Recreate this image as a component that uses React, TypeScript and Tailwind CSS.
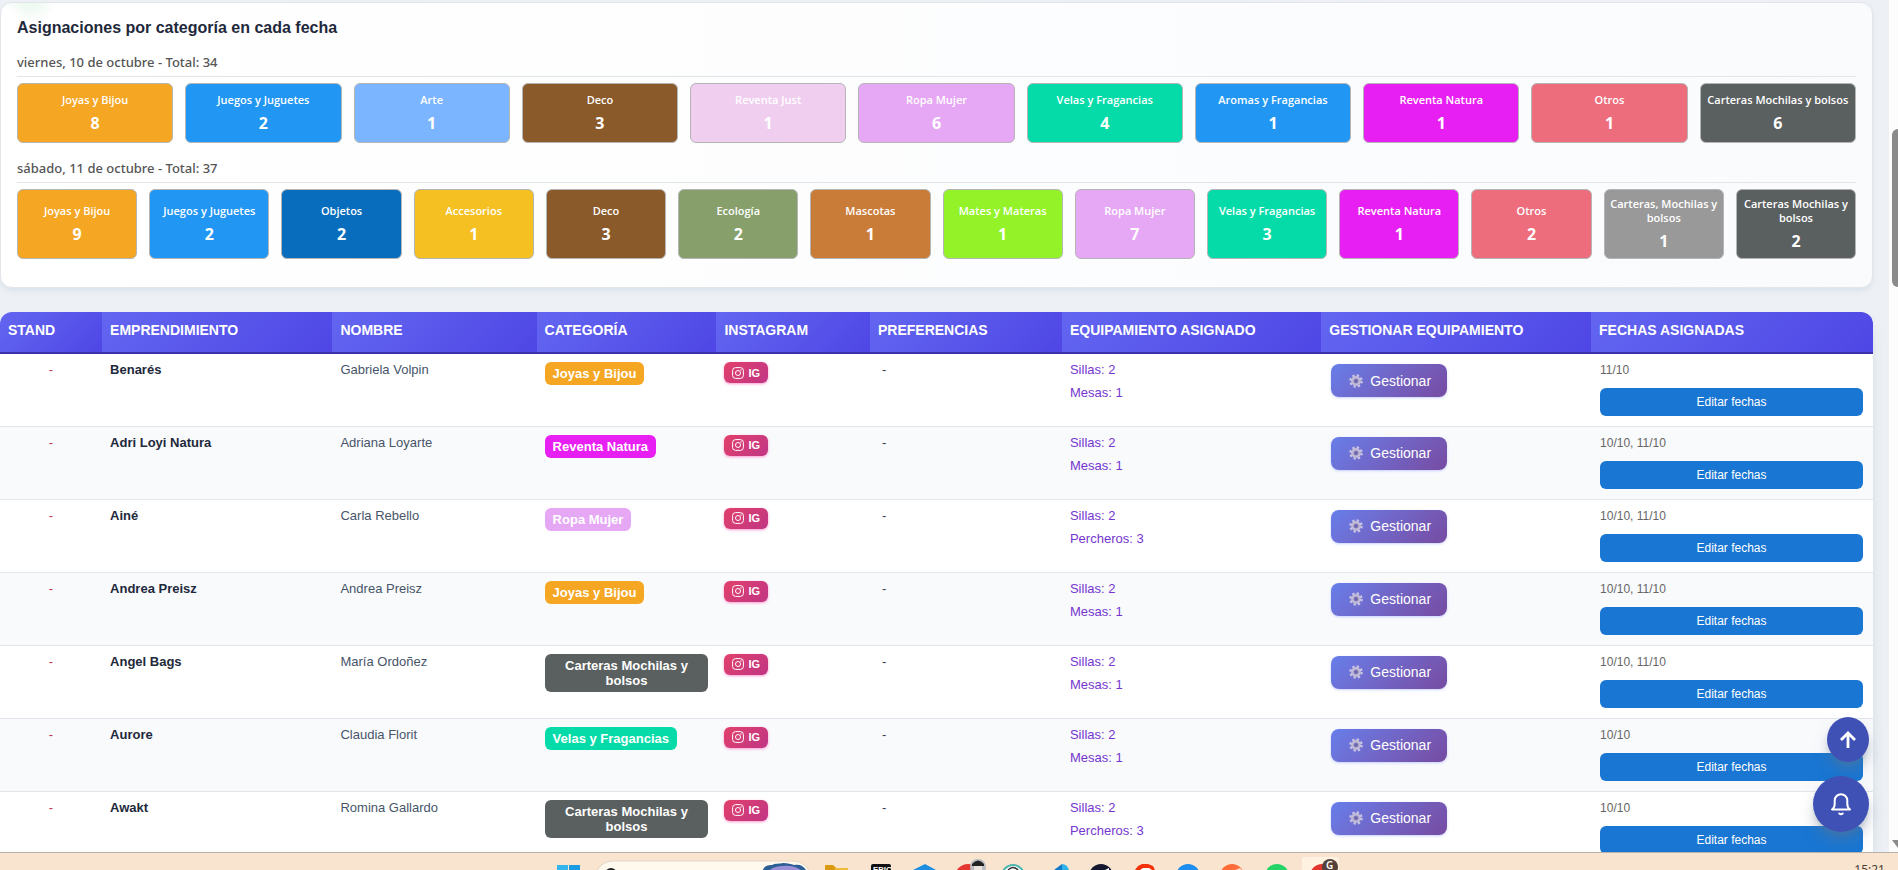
import React from "react";

type Category = { name: string; count: number; color: string };
type Row = { brand: string; owner: string; category: string; second: string; dates: string };

const COLORS: Record<string, string> = {
  "Joyas y Bijou": "bg-[#f5a623]",
  "Juegos y Juguetes": "bg-[#2196f3]",
  Arte: "bg-[#7bb5ff]",
  Deco: "bg-[#8b5a2b]",
  "Reventa Just": "bg-[#efcef0]",
  "Ropa Mujer": "bg-[#e6a8f5]",
  "Velas y Fragancias": "bg-[#04dba9]",
  "Aromas y Fragancias": "bg-[#2196f3]",
  "Reventa Natura": "bg-[#e81ff2]",
  Otros: "bg-[#ed6d7d]",
  "Carteras Mochilas y bolsos": "bg-[#5a5f5f]",
  "Carteras, Mochilas y bolsos": "bg-[#999999]",
  Objetos: "bg-[#086dbd]",
  Accesorios: "bg-[#f4c022]",
  Ecología: "bg-[#869f6b]",
  Mascotas: "bg-[#c97b38]",
  "Mates y Materas": "bg-[#93f328]",
};

const c = (name: string, count: number): Category => ({ name, count, color: COLORS[name] });

const DAYS = [
  {
    label: "viernes, 10 de octubre - Total: 34",
    items: [
      c("Joyas y Bijou", 8), c("Juegos y Juguetes", 2), c("Arte", 1), c("Deco", 3),
      c("Reventa Just", 1), c("Ropa Mujer", 6), c("Velas y Fragancias", 4),
      c("Aromas y Fragancias", 1), c("Reventa Natura", 1), c("Otros", 1),
      c("Carteras Mochilas y bolsos", 6),
    ],
  },
  {
    label: "sábado, 11 de octubre - Total: 37",
    items: [
      c("Joyas y Bijou", 9), c("Juegos y Juguetes", 2), c("Objetos", 2), c("Accesorios", 1),
      c("Deco", 3), c("Ecología", 2), c("Mascotas", 1), c("Mates y Materas", 1),
      c("Ropa Mujer", 7), c("Velas y Fragancias", 3), c("Reventa Natura", 1), c("Otros", 2),
      c("Carteras, Mochilas y bolsos", 1), c("Carteras Mochilas y bolsos", 2),
    ],
  },
];

const ROWS: Row[] = [
  { brand: "Benarés", owner: "Gabriela Volpin", category: "Joyas y Bijou", second: "Mesas: 1", dates: "11/10" },
  { brand: "Adri Loyi Natura", owner: "Adriana Loyarte", category: "Reventa Natura", second: "Mesas: 1", dates: "10/10, 11/10" },
  { brand: "Ainé", owner: "Carla Rebello", category: "Ropa Mujer", second: "Percheros: 3", dates: "10/10, 11/10" },
  { brand: "Andrea Preisz", owner: "Andrea Preisz", category: "Joyas y Bijou", second: "Mesas: 1", dates: "10/10, 11/10" },
  { brand: "Angel Bags", owner: "María Ordoñez", category: "Carteras Mochilas y bolsos", second: "Mesas: 1", dates: "10/10, 11/10" },
  { brand: "Aurore", owner: "Claudia Florit", category: "Velas y Fragancias", second: "Mesas: 1", dates: "10/10" },
  { brand: "Awakt", owner: "Romina Gallardo", category: "Carteras Mochilas y bolsos", second: "Percheros: 3", dates: "10/10" },
];

const COLUMNS = [
  { title: "Stand", width: "w-[5.45%]" },
  { title: "Emprendimiento", width: "w-[12.3%]" },
  { title: "Nombre", width: "w-[10.9%]" },
  { title: "Categoría", width: "w-[9.6%]" },
  { title: "Instagram", width: "w-[8.2%]" },
  { title: "Preferencias", width: "w-[10.25%]" },
  { title: "Equipamiento asignado", width: "w-[13.85%]" },
  { title: "Gestionar equipamiento", width: "w-[14.4%]" },
  { title: "Fechas asignadas", width: "w-[15.05%]" },
];

function InstagramIcon() {
  return (
    <svg viewBox="0 0 24 24" className="size-3" fill="none" stroke="currentColor" strokeWidth="2" aria-hidden="true">
      <rect x="1.2" y="1.2" width="21.6" height="21.6" rx="6" />
      <circle cx="12" cy="12" r="5" />
      <circle cx="18" cy="6" r="1.4" fill="currentColor" stroke="none" />
    </svg>
  );
}

function GearIcon() {
  return (
    <svg viewBox="0 0 24 24" className="size-[14px]" aria-hidden="true">
      <circle cx="12" cy="12" r="9.4" fill="none" stroke="#c9c3e2" strokeWidth="4.4" strokeDasharray="3.9 3.48" />
      <circle cx="12" cy="12" r="6" fill="none" stroke="#c0bad8" strokeWidth="5" />
      <circle cx="12" cy="12" r="3.6" fill="#6c62b4" stroke="#8a82b2" strokeWidth="1.6" />
    </svg>
  );
}

function DaySummary({ label, items }: { label: string; items: Category[] }) {
  return (
    <div className="mb-[15px]">
      <h3 className="mb-1.5 border-b border-[#e2e6ea] pb-1 text-[13px] leading-5 font-medium text-[#555]">{label}</h3>
      <div className="flex gap-3">
        {items.map((item) => (
          <div
            key={item.name}
            className={`${item.color} flex min-h-[60px] min-w-0 flex-1 flex-col items-center justify-center gap-1 rounded-md border border-[#b5b5b5] px-1 pt-[7px] pb-[5px] text-center font-bold text-white`}
          >
            <span className="font-['Open_Sans',sans-serif] text-[11px] leading-[14px] font-semibold">{item.name}</span>
            <span className="text-base leading-6">{item.count}</span>
          </div>
        ))}
      </div>
    </div>
  );
}

function Taskbar() {
  return (
    <footer className="relative h-[18px] shrink-0 overflow-hidden border-t border-[#b9b0aa] bg-[#f9e5cf]">
      <svg className="absolute top-0 left-0 h-[17px] w-[1898px]" viewBox="0 0 1898 17" aria-hidden="true">
        <rect x="557" y="12" width="11" height="10" fill="#35b5ee" />
        <rect x="569" y="12" width="11" height="10" fill="#1b9be2" />
        <rect x="595" y="8" width="216" height="36" rx="18" fill="#fff8ec" stroke="#e2d5c8" />
        <circle cx="611" cy="21" r="5" fill="none" stroke="#222" strokeWidth="2" />
        <path d="M763 17c1-4 5-5 9-5 3-2 8-1 11-2 5 0 8 1 11 2 5-1 9 0 12 5z" fill="#2b5f96" />
        <path d="M770 17c3-3 8-4 13-4 5-1 13 0 18 4z" fill="#9b8fd6" />
        <path d="M825 13h9l3 2h11v6h-23z" fill="#f0b93a" />
        <path d="M825 13q0-1 1-1h7l2 2v3h-10z" fill="#d99a12" />
        <rect x="871" y="11" width="20" height="20" rx="2" fill="#111" />
        <path d="M913 17l12-6 11 6z" fill="#1e8fe0" />
        <circle cx="968" cy="24" r="13" fill="#e5352f" />
        <circle cx="978" cy="14" r="8" fill="#b9bcc0" />
        <path d="M972 11q6-7 12 0v2h-12z" fill="#222" />
        <path d="M974 13h8v4h-8z" fill="#e9e2dd" />
        <circle cx="1013" cy="23" r="11" fill="#fff" stroke="#4db6ac" strokeWidth="2" />
        <path d="M1008 17q5-5 10 0" fill="none" stroke="#333" strokeWidth="1.5" />
        <path d="M1054 17l8-6v6z" fill="#1278c9" />
        <path d="M1062 11q5 0 7 6h-7z" fill="#2fb2ea" />
        <circle cx="1101" cy="23" r="12" fill="#15182f" />
        <path d="M1105 17l4-2v2z" fill="#fff" />
        <path d="M1135 17l3-4 4-2h6l5 2 2 4z" fill="#f4320c" />
        <path d="M1140 17l3-2h6l3 2z" fill="#fff" />
        <circle cx="1188" cy="23" r="12" fill="#1d8df0" />
        <circle cx="1232" cy="23" r="12" fill="#ff6c37" />
        <path d="M1235 17l5-2 2 2z" fill="#ffd9c8" />
        <circle cx="1277" cy="23" r="12" fill="#25d366" />
        <rect x="1302" y="4" width="37" height="30" rx="3" fill="#fff2e1" />
        <circle cx="1322" cy="23" r="12" fill="#e5352f" />
        <circle cx="1330" cy="14" r="8" fill="#56423a" />
      </svg>
      <span className="absolute top-[12px] left-[873px] font-['Liberation_Sans',sans-serif] text-[8px] leading-[9px] font-bold text-white">EPIC</span>
      <span className="absolute top-[7px] left-[1326px] text-[10px] leading-[10px] font-semibold text-white">G</span>
      <time className="absolute top-[9px] right-[13px] text-xs leading-4 text-[#4a4039]">15:21</time>
    </footer>
  );
}

export default function App() {
  return (
    <div className="flex h-screen flex-col overflow-hidden font-['Noto_Sans',sans-serif]">
      <div className="flex min-h-0 flex-1">
        <main className="relative min-w-0 flex-1 overflow-hidden bg-[#edf1f5] pt-0.5 pr-4">
          <section className="rounded-xl border border-[#e2e6ea] bg-[radial-gradient(circle_at_30px_-6px,#e4f6ea,transparent_26px),linear-gradient(to_right,#ffffff,#fafbfd)] px-4 pt-[13px] pb-[13px] shadow-md shadow-slate-300/40">
            <h2 className="mb-3 font-['Liberation_Sans',sans-serif] text-base leading-6 font-bold text-[#1e293b]">
              Asignaciones por categoría en cada fecha
            </h2>
            {DAYS.map((day) => (
              <DaySummary key={day.label} label={day.label} items={day.items} />
            ))}
          </section>

          <div className="mt-6 overflow-hidden rounded-t-xl shadow-lg shadow-slate-400/30">
            <table className="w-full table-fixed border-collapse bg-white text-left font-['Liberation_Sans',sans-serif] text-[13px] leading-4">
              <thead>
                <tr>
                  {COLUMNS.map((col) => (
                    <th
                      key={col.title}
                      scope="col"
                      className={`${col.width} h-[41px] border-b-2 border-[#3c2fae] bg-linear-135 from-[#6366f1] to-[#4f46e5] px-2 pb-1 text-sm leading-4 font-bold whitespace-nowrap text-white uppercase`}
                    >
                      {col.title}
                    </th>
                  ))}
                </tr>
              </thead>
              <tbody>
                {ROWS.map((row) => (
                  <tr key={row.brand} className="h-[73px] border-b border-[#e2e6ea] align-top even:bg-[#f9fafc]">
                    <td className="px-2 pt-2 text-center text-[#c2334d]">-</td>
                    <td className="px-2 pt-2 font-bold text-[#1e293b]">{row.brand}</td>
                    <td className="px-2 pt-2 text-[#475569]">{row.owner}</td>
                    <td className="px-2 pt-2">
                      <span className={`${COLORS[row.category]} inline-block rounded-md px-2 py-1 text-center leading-[15px] font-bold text-white`}>
                        {row.category}
                      </span>
                    </td>
                    <td className="px-2 pt-2">
                      <a
                        href="#instagram"
                        className="inline-flex h-[21px] items-center gap-1 rounded-md bg-linear-135 from-[#e1406a] to-[#c13584] px-2 text-[11px] font-bold text-white shadow-sm shadow-pink-300"
                      >
                        <InstagramIcon />
                        IG
                      </a>
                    </td>
                    <td className="px-3 pt-2 text-[#334155]">-</td>
                    <td className="px-2 pt-2 text-[#7536cf]">
                      <div>Sillas: 2</div>
                      <div className="mt-[7px]">{row.second}</div>
                    </td>
                    <td className="px-2.5 pt-2.5">
                      <button
                        type="button"
                        className="flex h-[33px] items-center gap-[7px] rounded-lg bg-linear-135 from-[#667eea] to-[#764ba2] px-4 pl-[18px] text-sm text-white shadow-sm shadow-indigo-300/50"
                      >
                        <GearIcon />
                        Gestionar
                      </button>
                    </td>
                    <td className="pt-2 pr-2.5 pl-[9px] text-xs leading-4 text-[#666]">
                      <div>{row.dates}</div>
                      <button type="button" className="mt-2.5 h-7 w-full rounded-md bg-[#1976d2] text-white">
                        Editar fechas
                      </button>
                    </td>
                  </tr>
                ))}
              </tbody>
            </table>
          </div>

          <div className="absolute right-5 bottom-5 flex flex-col items-end gap-3.5">
            <button
              type="button"
              aria-label="Subir"
              className="flex h-[45px] w-[42px] items-center justify-center rounded-[50%] bg-[#3f51b5] text-white shadow-lg shadow-slate-500/50"
            >
              <svg viewBox="0 0 24 24" className="size-6" fill="none" stroke="currentColor" strokeWidth="2.8" aria-hidden="true">
                <path d="M12 20V5.500M5 12l7-7 7 7" />
              </svg>
            </button>
            <button
              type="button"
              aria-label="Notificaciones"
              className="flex size-14 items-center justify-center rounded-full bg-[#3f51b5] text-white shadow-lg shadow-slate-500/50"
            >
              <svg viewBox="0 0 24 24" className="size-6" fill="none" stroke="currentColor" strokeWidth="2" strokeLinejoin="round" strokeLinecap="round" aria-hidden="true">
                <path d="M3 17.500h18c-2-1.500-2.700-3-2.700-5.500V8.500a6.300 6.300 0 0 0-12.600 0V12c0 2.500-.7 4-2.700 5.500z" />
                <path d="M10.300 21.500q1.700 1.400 3.400 0" />
              </svg>
            </button>
          </div>
        </main>

        <div className="relative w-[9px] shrink-0 bg-[#fcfcfd]" aria-hidden="true">
          <div className="absolute top-[129px] right-0 h-[158px] w-1.5 rounded-l-md bg-[#8a8a8a]" />
          <svg viewBox="0 0 6 8" className="absolute right-0 bottom-1 h-2 w-1.5">
            <path d="M0 0h6v8z" fill="#8a8a8a" />
          </svg>
        </div>
      </div>
      <Taskbar />
    </div>
  );
}
